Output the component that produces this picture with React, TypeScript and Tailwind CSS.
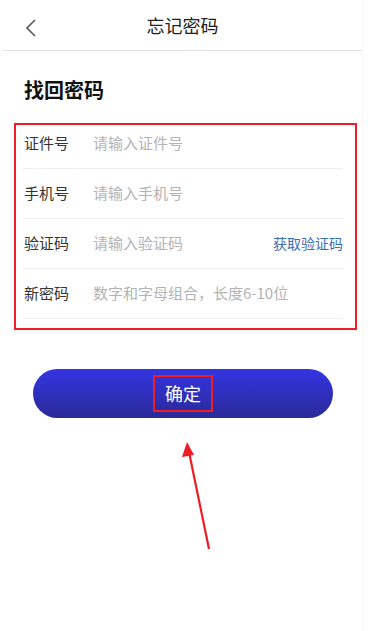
import React from "react";

const font = { fontFamily: '"Noto Sans CJK SC", "Noto Sans", sans-serif' };

function Row({ label, placeholder, action }: { label: string; placeholder: string; action?: string }) {
  return (
    <div className="flex h-[50px] items-center border-b border-[#f0f0f0]">
      <span className="w-[70px] pl-[1px] text-[15px] text-[#333]">{label}</span>
      <span className="flex-1 text-[15px] text-[#b3b3b3]">{placeholder}</span>
      {action && <span className="text-[14px] text-[#3a6db2]">{action}</span>}
    </div>
  );
}

export default function App() {
  return (
    <div className="relative h-[631px] w-[384px] bg-white" style={font}>
      <div className="relative h-full w-[363px] border-r border-[#f8f8f8]">
        <div className="relative ml-[3px] flex h-[51px] items-center justify-center border-b border-[#e3e3e3]">
          <svg className="absolute left-[21px] top-[18px]" width="14" height="20" viewBox="0 0 14 20">
            <path d="M11 2 L3 10 L11 18" fill="none" stroke="#555" strokeWidth="1.6" />
          </svg>
          <span className="text-[18px] text-[#222]">忘记密码</span>
        </div>
        <div className="pl-[24px] pt-[26px] text-[20px] font-bold leading-[26px] text-[#111]">找回密码</div>
        <div className="relative ml-[23px] mt-[16px] w-[320px]">
          <Row label="证件号" placeholder="请输入证件号" />
          <Row label="手机号" placeholder="请输入手机号" />
          <Row label="验证码" placeholder="请输入验证码" action="获取验证码" />
          <Row label="新密码" placeholder="数字和字母组合，长度6-10位" />
          <div className="pointer-events-none absolute left-[-9px] top-[4px] h-[207px] w-[343px] border-2 border-[#ee1c25]" />
        </div>
        <div className="mx-[33px] mt-[50px] flex h-[49px] w-[300px] items-center justify-center rounded-full bg-gradient-to-b from-[#3434e4] to-[#2a2a98]">
          <span className="relative border-2 border-[#ee1c25] px-[10px] py-[3px] text-[18px] text-white">确定</span>
        </div>
      </div>
      <svg className="pointer-events-none absolute left-0 top-0" width="384" height="631">
        <line x1="209" y1="549" x2="189" y2="452" stroke="#ee1c25" strokeWidth="2.2" />
        <polygon points="187,442 182,457 194,455" fill="#ee1c25" />
      </svg>
    </div>
  );
}
